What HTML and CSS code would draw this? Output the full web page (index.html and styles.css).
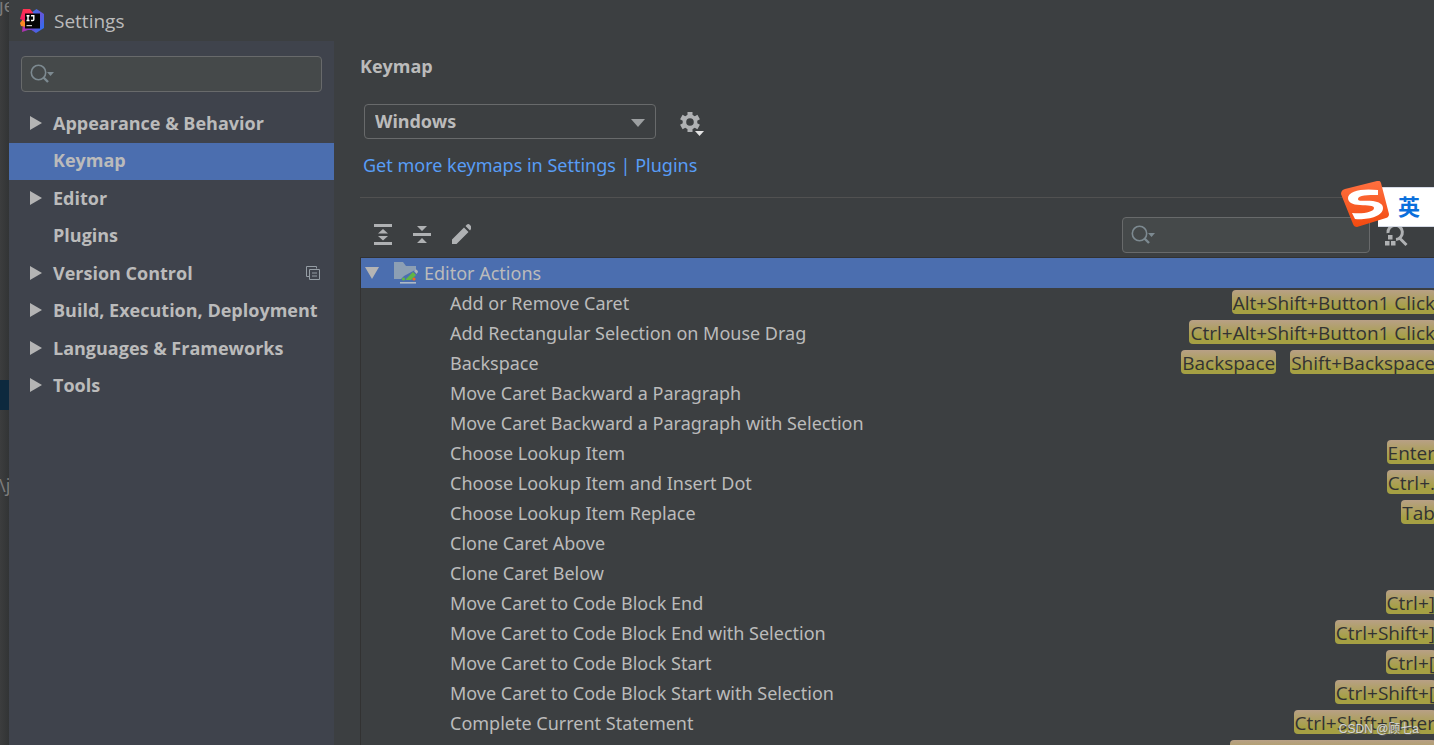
FILE: index.html
```html
<!DOCTYPE html>
<html lang="en">
<head>
<meta charset="utf-8">
<title>Settings</title>
<link rel="stylesheet" href="styles.css">
</head>
<body>
<div class="editor-strip" aria-hidden="true">
  <span class="strip-text strip-top">je</span>
  <span class="strip-selection"></span>
  <span class="strip-text strip-low">\j</span>
</div>
<div class="dialog">
  <header class="titlebar">
    <svg class="logo" viewBox="0 0 24 24" aria-hidden="true">
      <defs>
        <linearGradient id="lg-a" x1="0" y1="0" x2="0" y2="1"><stop offset="0" stop-color="#ff3350"/><stop offset="1" stop-color="#f0186a"/></linearGradient>
        <linearGradient id="lg-b" x1="0" y1="0" x2="1" y2="1"><stop offset="0" stop-color="#2f7af0"/><stop offset=".5" stop-color="#6656d8"/><stop offset="1" stop-color="#1f74f5"/></linearGradient>
        <linearGradient id="lg-c" x1="0" y1="0" x2="1" y2="0"><stop offset="0" stop-color="#b82fa8"/><stop offset="1" stop-color="#5a50e0"/></linearGradient>
      </defs>
      <path d="M11 4 16.500 0 24 5v14l-8 5-6-4z" fill="url(#lg-b)"/>
      <path d="M3 15h9l3 7-3-1-4 0-6 2z" fill="url(#lg-c)"/>
      <path d="M0 14 4 9l2 9-5-1z" fill="#fc8a24"/>
      <path d="M3 0h7l4 5-8 9-3-3-3-1z" fill="url(#lg-a)"/>
      <path d="M5 4.500h15v15H5z" fill="#050505"/>
      <path d="M6.500 6.700h3M8 6.700v5M6.500 11.500h3M11 6.700h2.800v3.800q0 1-1 1H11" fill="none" stroke="#fff" stroke-width="1.400"/>
      <path d="M6.500 16h5.500v1.200H6.500z" fill="#ccc"/>
    </svg>
    <h1 class="title">Settings</h1>
  </header>
  <div class="body">
    <aside class="sidebar">
      <label class="search">
        <svg class="search-icon" viewBox="0 0 26 20" aria-hidden="true"><circle cx="8.500" cy="8.500" r="7.200" fill="none" stroke="#7d8a91" stroke-width="1.600"/><path d="m13.500 13.500 4.500 4.500" stroke="#7d8a91" stroke-width="2.400"/><path d="M17 8h7l-3.500 4z" fill="#7d8a91"/></svg>
        <input class="search-input" type="text" aria-label="Search settings">
      </label>
      <nav class="categories">
        <a class="category" href="#"><svg class="arrow" viewBox="0 0 12 14"><path d="M0 0v14l12-7z"/></svg><span>Appearance &amp; Behavior</span></a>
        <a class="category selected" href="#"><span class="arrow"></span><span>Keymap</span></a>
        <a class="category" href="#"><svg class="arrow" viewBox="0 0 12 14"><path d="M0 0v14l12-7z"/></svg><span>Editor</span></a>
        <a class="category" href="#"><span class="arrow"></span><span>Plugins</span></a>
        <a class="category" href="#"><svg class="arrow" viewBox="0 0 12 14"><path d="M0 0v14l12-7z"/></svg><span>Version Control</span><svg class="project-icon" viewBox="0 0 14 14"><path d="M3.500 10.500h-3v-10h10v2M3.500 3.500h10v10h-10zM6 7h5M6 10h5" fill="none" stroke="#959da4"/></svg></a>
        <a class="category" href="#"><svg class="arrow" viewBox="0 0 12 14"><path d="M0 0v14l12-7z"/></svg><span>Build, Execution, Deployment</span></a>
        <a class="category" href="#"><svg class="arrow" viewBox="0 0 12 14"><path d="M0 0v14l12-7z"/></svg><span>Languages &amp; Frameworks</span></a>
        <a class="category" href="#"><svg class="arrow" viewBox="0 0 12 14"><path d="M0 0v14l12-7z"/></svg><span>Tools</span></a>
      </nav>
    </aside>
    <main class="content">
      <h2 class="heading">Keymap</h2>
      <div class="scheme">
        <div class="select-box">
          <select class="select" aria-label="Keymap scheme"><option>Windows</option></select>
          <svg class="select-arrow" viewBox="0 0 14 8"><path d="M0 0h14L7 8z" fill="#9c9fa1"/></svg>
        </div>
        <button class="icon-button" aria-label="Scheme actions">
          <svg class="gear" viewBox="0 0 24 24"><g fill="#afb1b3"><path d="M7.500 0h5v4h-5zM7.500 16h5v4h-5z"/><path d="M7.500 0h5v4h-5zM7.500 16h5v4h-5z" transform="rotate(60 10 10)"/><path d="M7.500 0h5v4h-5zM7.500 16h5v4h-5z" transform="rotate(120 10 10)"/></g><circle cx="10" cy="10" r="5.600" fill="none" stroke="#afb1b3" stroke-width="3.600"/><path d="M15 19h9l-4.500 5z" fill="#e4e4e4"/></svg>
        </button>
      </div>
      <a class="link" href="#">Get more keymaps in Settings | Plugins</a>
      <div class="toolbar">
        <button class="icon-button" aria-label="Expand all"><svg class="tool" viewBox="0 0 20 22"><path d="M1 0h18v3H1zM1 18h18v3H1zM10 5l5 4.500H5zM10 16.500 5 12h10z" fill="#afb1b3"/></svg></button>
        <button class="icon-button" aria-label="Collapse all"><svg class="tool" viewBox="0 0 20 22"><path d="M1 9h18v3H1zM10 7 5 2h10zM10 14l5 5H5z" fill="#afb1b3"/></svg></button>
        <button class="icon-button" aria-label="Edit shortcut"><svg class="tool" viewBox="0 0 20 22"><path d="M1 15.500 13 3.500l4.500 4.500-12 12H1zM14.500 2l1.500-1.500q1.500-1 3 .5l1 1.200q1 1.300 0 2.800l-1 1.500z" fill="#afb1b3"/></svg></button>
        <label class="search search-actions">
          <svg class="search-icon" viewBox="0 0 26 20" aria-hidden="true"><circle cx="8.500" cy="8.500" r="7.200" fill="none" stroke="#7d8a91" stroke-width="1.600"/><path d="m13.500 13.500 4.500 4.500" stroke="#7d8a91" stroke-width="2.400"/><path d="M17 8h7l-3.500 4z" fill="#7d8a91"/></svg>
          <input class="search-input" type="text" aria-label="Search actions">
        </label>
        <button class="icon-button find" aria-label="Find actions by shortcut"><svg class="find-icon" viewBox="0 0 24 24"><path d="M4 10a7.200 7.200 0 1 1 8 6.500M15.500 15l7 7" fill="none" stroke="#afb1b3" stroke-width="3"/><path d="M4 12h4.500v4.500H4zM1 18h4.500v4.500H1zM7 18h4.500v4.500H7z" fill="#afb1b3"/></svg></button>
      </div>
      <ul class="actions">
        <li class="row group"><svg class="group-arrow" viewBox="0 0 14 12"><path d="M0 0h14L7 12z" fill="#b4b4b4"/></svg><svg class="folder" viewBox="0 0 24 22"><path d="M0 0h9l3 4h10v13H0z" fill="#8c9fb4"/><path d="M7 17l3-3 11-6 3 3-3 9H7z" fill="#4b6eaf"/><path d="m12 17 7-7 3 3-5 5h-5z" fill="#62b543"/><path d="m20 9 1-1q1-1 2 0t1 2l-1.500 2z" fill="#aeb5ba"/><circle cx="9.500" cy="17" r="1.600" fill="#62b543"/><circle cx="20" cy="17" r="1.600" fill="#f26522"/><path d="M6 20h16v1.600H6z" fill="#aeb9c7"/></svg><span>Editor Actions</span></li>
        <li class="row"><span>Add or Remove Caret</span><span class="keys"><kbd>Alt+Shift+Button1 Click</kbd></span></li>
        <li class="row"><span>Add Rectangular Selection on Mouse Drag</span><span class="keys"><kbd>Ctrl+Alt+Shift+Button1 Click</kbd></span></li>
        <li class="row"><span>Backspace</span><span class="keys"><kbd>Backspace</kbd><kbd>Shift+Backspace</kbd></span></li>
        <li class="row"><span>Move Caret Backward a Paragraph</span></li>
        <li class="row"><span>Move Caret Backward a Paragraph with Selection</span></li>
        <li class="row"><span>Choose Lookup Item</span><span class="keys"><kbd>Enter</kbd></span></li>
        <li class="row"><span>Choose Lookup Item and Insert Dot</span><span class="keys"><kbd>Ctrl+.</kbd></span></li>
        <li class="row"><span>Choose Lookup Item Replace</span><span class="keys"><kbd>Tab</kbd></span></li>
        <li class="row"><span>Clone Caret Above</span></li>
        <li class="row"><span>Clone Caret Below</span></li>
        <li class="row"><span>Move Caret to Code Block End</span><span class="keys"><kbd>Ctrl+]</kbd></span></li>
        <li class="row"><span>Move Caret to Code Block End with Selection</span><span class="keys"><kbd>Ctrl+Shift+]</kbd></span></li>
        <li class="row"><span>Move Caret to Code Block Start</span><span class="keys"><kbd>Ctrl+[</kbd></span></li>
        <li class="row"><span>Move Caret to Code Block Start with Selection</span><span class="keys"><kbd>Ctrl+Shift+[</kbd></span></li>
        <li class="row"><span>Complete Current Statement</span><span class="keys"><kbd>Ctrl+Shift+Enter</kbd></span></li>
        <li class="row"><span class="keys"><kbd class="key-blank"></kbd></span></li>
      </ul>
    </main>
  </div>
</div>
<div class="ime">
  <svg class="ime-logo" viewBox="0 0 48 46" aria-hidden="true">
    <defs><linearGradient id="lg-s" x1="0" y1="0" x2="0" y2="1"><stop offset="0" stop-color="#ff7040"/><stop offset="1" stop-color="#f24a10"/></linearGradient></defs>
    <path d="M4 8 36 0q3-1 4 2l8 31q0 3-3 4l-29 9q-3 0-4-3L0 13q0-4 4-5z" fill="url(#lg-s)"/>
    <path d="M37 9v5c-10 0-20 0-20 4 0 3 6 1 15 2 6 1 10 3 10 7 0 9-16 12-28 11l-3-6c12 1 22-1 22-5 0-3-6-2-14-3-8 0-12-3-12-7 0-7 14-10 30-8z" fill="#fff"/>
  </svg>
  <span class="ime-mode" lang="zh">英</span>
</div>
<div class="watermark">CSDN @顾七a</div>
</body>
</html>
```
FILE: styles.css
```css
* {
  box-sizing: border-box;
}

body {
  margin: 0;
  display: flex;
  height: 100vh;
  overflow: hidden;
  background: #3c3f41;
  color: #bbbbbb;
  font-family: "Noto Sans", "Open Sans", sans-serif;
  font-size: 18px;
  line-height: 30px;
}

h1,
h2,
ul {
  margin: 0;
  padding: 0;
  font-size: inherit;
  list-style: none;
}

a {
  color: inherit;
  text-decoration: none;
}

svg {
  display: block;
  flex: none;
}

button {
  padding: 0;
  border: 0;
  background: none;
}

.editor-strip {
  position: relative;
  flex: none;
  width: 9px;
  overflow: hidden;
  background: linear-gradient(90deg, #3c3d3e, #323435);
}

.strip-text,
.strip-selection {
  position: absolute;
  color: #7c7c7c;
}

.strip-top {
  top: -10px;
  left: -1px;
}

.strip-selection {
  top: 380px;
  width: 100%;
  height: 30px;
  background: #0d293e;
}

.strip-low {
  top: 470px;
  left: -1px;
}

.dialog {
  flex: 1;
  min-width: 0;
  display: flex;
  flex-direction: column;
}

.titlebar {
  flex: none;
  display: flex;
  align-items: center;
  gap: 10px;
  height: 41px;
  padding-left: 11px;
}

.logo {
  width: 24px;
  height: 24px;
}

.title {
  font-family: "Open Sans", "Noto Sans", sans-serif;
  font-size: 19px;
  font-weight: 400;
}

.body {
  flex: 1;
  min-height: 0;
  display: flex;
}

.sidebar {
  flex: none;
  width: 325px;
  padding-top: 15px;
  background: #3f434c;
}

.search {
  display: flex;
  align-items: center;
  gap: 4px;
  height: 36px;
  margin: 0 12px;
  padding: 0 8px;
  border: 1px solid #686a6b;
  border-radius: 4px;
  background: #45494a;
}

.search-icon {
  width: 26px;
  height: 20px;
}

.search-input {
  flex: 1;
  min-width: 0;
  border: 0;
  outline: 0;
  background: none;
  color: inherit;
  font: inherit;
}

.categories {
  display: grid;
  grid-auto-rows: 1fr;
  height: 300px;
  margin-top: 13px;
  font-family: "Open Sans", "Noto Sans", sans-serif;
  font-weight: 700;
}

.category {
  display: flex;
  align-items: center;
  gap: 11px;
  padding: 0 14px 2px 21px;
  white-space: nowrap;
}

.selected,
.group {
  background: #4b6eaf;
}

.arrow {
  width: 12px;
  height: 14px;
  fill: #b4b4b4;
}

.project-icon {
  width: 14px;
  height: 14px;
  margin-left: auto;
}

.content {
  flex: 1;
  min-width: 0;
  padding: 10px 0 0 26px;
  overflow: hidden;
}

.heading {
  font-family: "Open Sans", "Noto Sans", sans-serif;
  font-weight: 700;
}

.scheme {
  display: flex;
  align-items: center;
  gap: 24px;
  margin: 23px 0 0 4px;
}

.select-box {
  position: relative;
  width: 292px;
}

.select {
  appearance: none;
  display: block;
  width: 100%;
  height: 35px;
  padding: 0 10px 2px;
  border: 1px solid #686a6b;
  border-radius: 4px;
  background: #3c3f41;
  color: inherit;
  font: inherit;
  font-weight: 700;
}

.select-arrow {
  position: absolute;
  top: 15px;
  right: 11px;
  width: 14px;
  height: 8px;
  pointer-events: none;
}

.gear {
  width: 24px;
  height: 24px;
  margin-top: 4px;
}

.link {
  display: block;
  margin: 11px 0 17px 3px;
  color: #589df6;
}

.toolbar {
  display: flex;
  align-items: center;
  gap: 19px;
  height: 60px;
  padding: 14px 26px 0 13px;
  border-top: 1px solid #515151;
}

.tool {
  width: 20px;
  height: 22px;
}

.search-actions {
  width: 248px;
  margin: 0 -5px 0 auto;
}

.find-icon {
  width: 24px;
  height: 24px;
}

.actions {
  border-top: 1px solid #323232;
  border-left: 1px solid #323232;
}

.row {
  display: flex;
  align-items: center;
  height: 30px;
  padding-left: 89px;
  white-space: nowrap;
}

.group {
  gap: 6px;
  padding-left: 4px;
}

.group-arrow {
  width: 14px;
  height: 12px;
}

.folder {
  width: 24px;
  height: 22px;
  margin-left: 9px;
}

.keys {
  display: flex;
  gap: 14px;
  margin-left: auto;
  margin-right: -2px;
  padding-bottom: 2px;
}

kbd {
  height: 24px;
  padding: 0 1px;
  border-radius: 4px;
  background: linear-gradient(#b8a086, #a5a043 75%);
  color: #333333;
  font-family: "Open Sans", "Noto Sans", sans-serif;
  font-size: 19px;
  line-height: 26px;
}

.key-blank {
  width: 206px;
}

.ime {
  position: absolute;
  z-index: 1;
  top: 181px;
  right: 0;
  display: flex;
  align-items: center;
  width: 93px;
}

.ime::before {
  content: "";
  position: absolute;
  z-index: -1;
  top: 6px;
  right: 0;
  width: 56px;
  height: 38px;
  border: solid #d5dae6;
  border-width: 1px 0;
  background: #ffffff;
}

.ime-logo {
  width: 48px;
  height: 46px;
}

.ime-mode {
  margin: 2px 0 0 9px;
  color: #0a6fdc;
  font-family: "Noto Sans CJK SC", sans-serif;
  font-size: 22px;
  font-weight: 700;
}

.watermark {
  position: absolute;
  right: 15px;
  bottom: 6px;
  color: #d6d6d6;
  font-family: "Liberation Sans", "Noto Sans CJK SC", sans-serif;
  font-size: 12px;
  line-height: 20px;
  text-shadow: 1px 1px 1px #55555a;
}
```
